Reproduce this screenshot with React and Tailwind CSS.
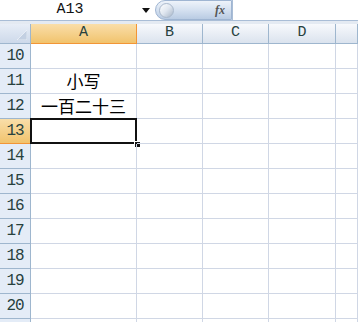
import React from "react";

const cols = [
	{ name: "A", w: "w-[106px]" },
	{ name: "B", w: "w-[66px]" },
	{ name: "C", w: "w-[66px]" },
	{ name: "D", w: "w-[67px]" },
	{ name: "", w: "flex-1" },
];

const rows = [10, 11, 12, 13, 14, 15, 16, 17, 18, 19, 20, 21];

const cellText = {
	11: "小写",
	12: "一百二十三",
};

export default function App() {
	return (
		<div className="w-[358px] h-[322px] overflow-hidden bg-white font-['Liberation_Sans',sans-serif]">
			{/* name box + formula bar */}
			<div className="flex h-[21px] border-b border-[#a9bdd6] bg-white">
				<div className="w-[136px] flex items-center justify-center text-[15px] text-[#111] font-['Liberation_Mono',monospace] pl-1">
					A13
				</div>
				<div className="w-[19px] flex items-center justify-center">
					<svg width="8" height="5" viewBox="0 0 8 5">
						<path d="M0 0h8L4 5z" fill="#111" />
					</svg>
				</div>
				<div className="relative w-[77px] h-[20px] rounded-l-full bg-gradient-to-b from-[#eef3fa] via-[#d5e1f0] to-[#b9cbe3] border border-[#9fb5d2] flex items-center justify-end pr-[6px]">
					<div className="absolute left-[3px] top-[2px] w-[15px] h-[15px] rounded-full bg-gradient-to-br from-white via-[#dfe6ef] to-[#a8b6c8] border border-[#aab9cc]" />
					<span className="font-['Liberation_Serif',serif] italic font-bold text-[12px] text-[#555]">fx</span>
				</div>
				<div className="flex-1 border-l border-[#a9bdd6] bg-white" />
			</div>
			<div className="h-[3px] bg-[#e4eaf2]" />

			{/* column headers */}
			<div className="flex h-[20px]">
				<div className="relative w-[31px] border-r border-b border-[#9eb6ce] bg-gradient-to-b from-[#e8eef7] to-[#cdd9ea]">
					<svg className="absolute right-[3px] bottom-[3px]" width="10" height="10" viewBox="0 0 10 10">
						<path d="M10 0V10H0z" fill="#c3d0e2" stroke="#f7f9fc" strokeWidth="0.6" />
					</svg>
				</div>
				{cols.map((c, i) => (
					<div
						key={i}
						className={
							c.name === "A"
								? `${c.w} flex items-center justify-center border-r border-b border-[#f29536] bg-gradient-to-b from-[#f9dea9] to-[#f1c36c] text-[15px] text-[#27413e] font-['Liberation_Mono',monospace]`
								: `${c.w} flex items-center justify-center border-r border-b border-[#9eb6ce] bg-gradient-to-b from-[#f7f9fc] to-[#dbe3ee] text-[15px] text-[#27413e] font-['Liberation_Mono',monospace]`
						}
					>
						{c.name}
					</div>
				))}
			</div>

			{/* grid rows */}
			{rows.map((r) => (
				<div key={r} className="flex h-[25px]">
					<div
						className={
							r === 13
								? "w-[31px] flex items-center justify-center border-r border-b border-[#f29536] bg-gradient-to-b from-[#f9dea9] to-[#f1c36c] text-[16px] text-[#27413e] font-['Liberation_Mono',monospace] tracking-[-1px]"
								: "w-[31px] flex items-center justify-center border-r border-b border-[#9eb6ce] bg-[#e4ecf7] text-[16px] text-[#27413e] font-['Liberation_Mono',monospace] tracking-[-1px]"
						}
					>
						{/* row 21 only peeks in at the bottom edge */}
						{r < 21 ? r : ""}
					</div>
					{cols.map((c, i) => (
						<div
							key={i}
							className={`${c.w} relative border-r border-b border-[#d0d7e5] flex items-center justify-center text-[17px] text-black font-['Noto_Sans_CJK_SC',sans-serif]`}
						>
							{i === 0 && cellText[r]}
							{i === 0 && r === 13 && (
								<>
									<div className="absolute -left-px -top-px -right-px -bottom-px border-2 border-[#111]" />
									<div className="absolute right-[-5px] bottom-[-5px] w-[7px] h-[7px] bg-[#111] border border-white" />
								</>
							)}
						</div>
					))}
				</div>
			))}
		</div>
	);
}
